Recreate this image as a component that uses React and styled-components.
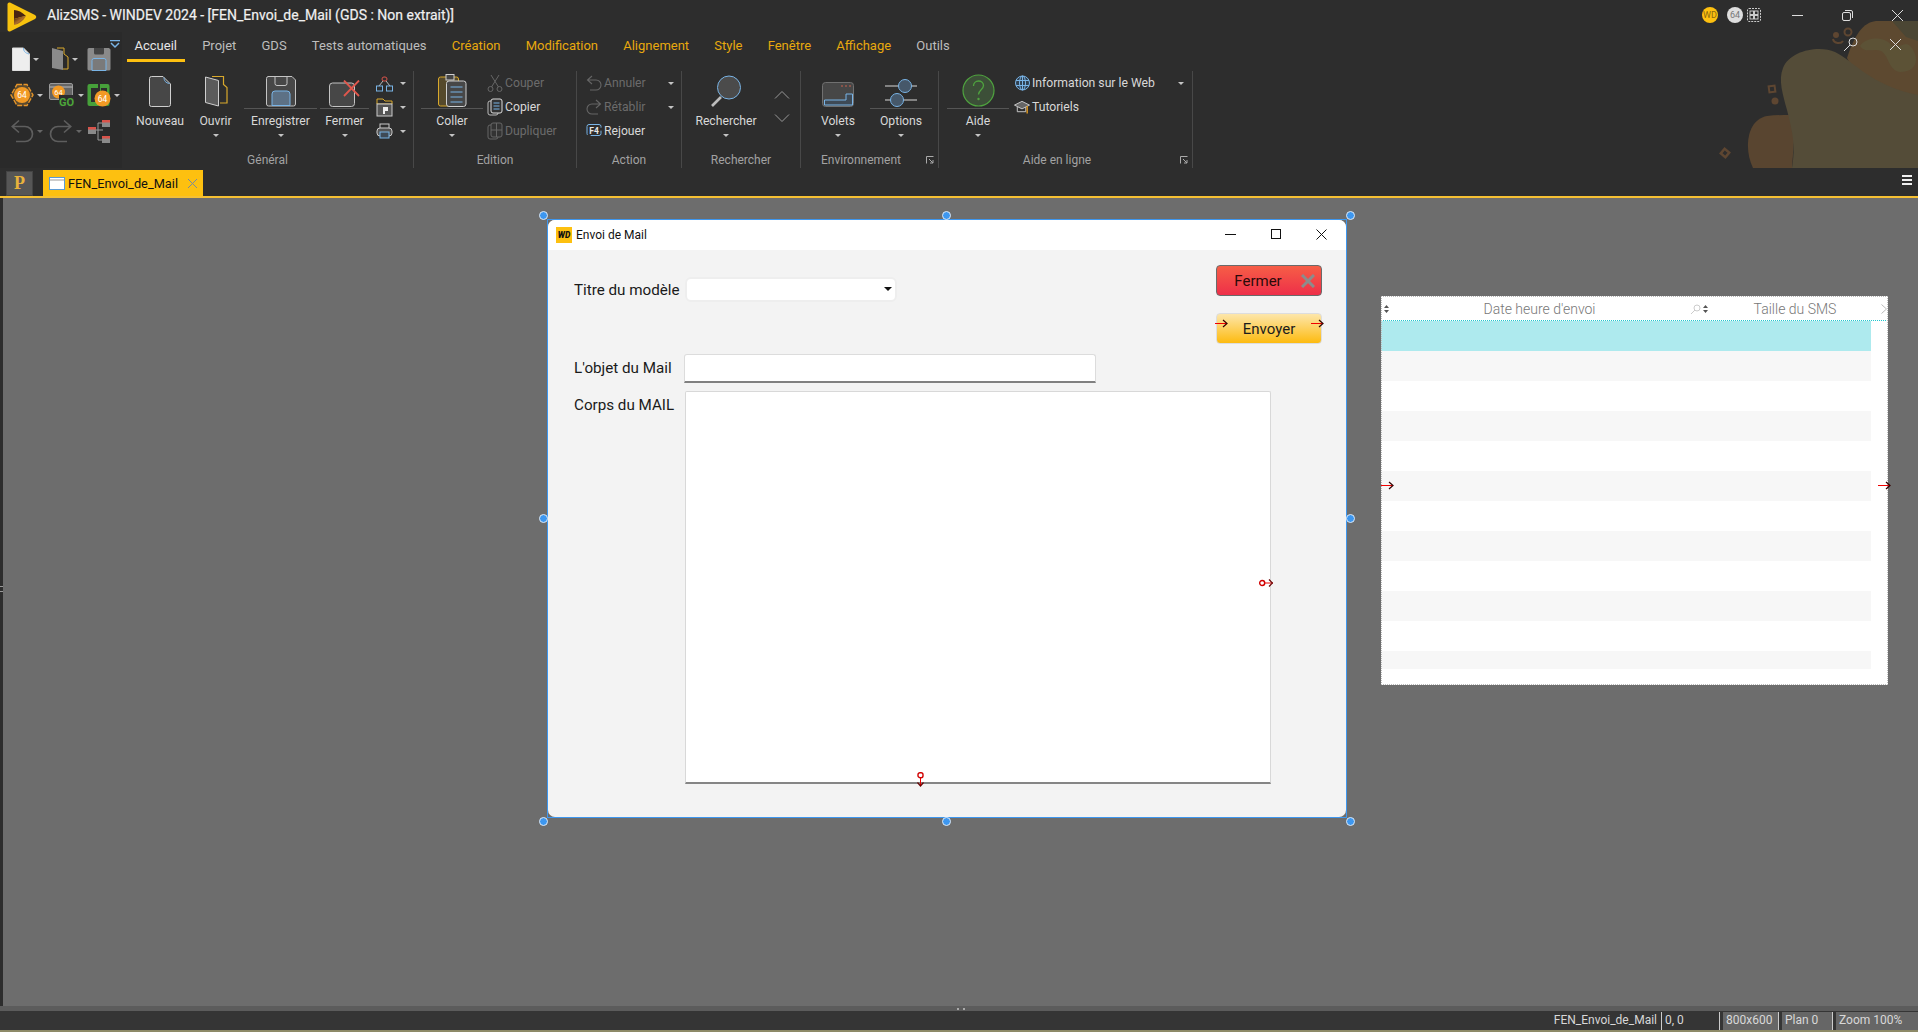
import styled, { createGlobalStyle } from "styled-components";

const GlobalStyle = createGlobalStyle`
    html, body {
        margin: 0;
        padding: 0;
        background: #2d2d2d;
    }
    * {
        box-sizing: border-box;
    }
    body {
        font-family: Roboto, "Noto Sans", sans-serif;
        overflow: hidden;
    }
`;

/* ---------- drawings ---------- */

const Logo = () => (
    <svg width="30" height="32" viewBox="0 0 30 32">
        <defs>
            <linearGradient id="logoBand" x1="0" y1="0" x2="1" y2="1">
                <stop offset="0" stopColor="#3a1c10" />
                <stop offset="0.5" stopColor="#b0702a" />
                <stop offset="1" stopColor="#3a1c10" />
            </linearGradient>
        </defs>
        <path d="M3 1.500 L28 14 Q30.500 16 28 18 L3 30.500 Q0.500 31 0.500 28.500 V3.500 Q0.500 1 3 1.500 Z" fill="#f7c20e" />
        <path d="M7 9 C11 9 15 11 19 15 L14 16 L7 18 Z" fill="#4a2412" />
        <path d="M7 18 L14 16 L19 15 C16 20 12 23 7 24 Z" fill="url(#logoBand)" />
    </svg>
);

const BigDoc = () => (
    <svg width="24" height="32" viewBox="0 0 24 32">
        <path d="M1.500 3.500a2 2 0 0 1 2-2H15l7.500 7.500v20.500a2 2 0 0 1-2 2h-17a2 2 0 0 1-2-2z" fill="#474747" stroke="#cfcfcf" />
        <path d="M16 2.500c0 3 1.500 5.500 5.500 6" fill="none" stroke="#79b4e6" />
    </svg>
);

const BigFolder = () => (
    <svg width="24" height="32" viewBox="0 0 24 32">
        <path d="M8 1.500h11.500v8l3.500 3v15.500h-7" fill="none" stroke="#d9a92c" strokeWidth="1.200" />
        <path d="M1.500 2l13 3.500v25.500l-13-3.500z" fill="#5b5b5b" stroke="#cfcfcf" />
    </svg>
);

const BigSave = () => (
    <svg width="32" height="32" viewBox="0 0 32 32">
        <path d="M3 1.500h24l3.500 3.500v24a2 2 0 0 1-2 2h-25a2 2 0 0 1-2-2V3.500a2 2 0 0 1 2-2z" fill="#474747" stroke="#c4c4c4" />
        <path d="M10 1.500v7a2 2 0 0 0 2 2h8a2 2 0 0 0 2-2v-7" fill="none" stroke="#c4c4c4" />
        <path d="M7 30.500V19a3 3 0 0 1 3-3h12a3 3 0 0 1 3 3v11.500z" fill="#5d7185" stroke="#79b4e6" />
    </svg>
);

const BigClose = () => (
    <svg width="31" height="27" viewBox="0 0 31 27">
        <rect x="0.500" y="3" width="25" height="23.500" rx="3" fill="#474747" stroke="#c4c4c4" />
        <path d="M15 0.500l15 15.500M30 0.500L15 16" stroke="#e0574c" strokeWidth="1.800" />
    </svg>
);

const BigPaste = () => (
    <svg width="29" height="33" viewBox="0 0 29 33">
        <rect x="0.500" y="3" width="20" height="29" rx="2" fill="#55492b" stroke="#d9a92c" />
        <rect x="8.500" y="7" width="19.500" height="25.500" rx="2.500" fill="#474747" stroke="#cfcfcf" />
        <rect x="8" y="0.500" width="8" height="5.500" fill="#444" stroke="#cfcfcf" />
        <path d="M12.500 13h12M12.500 18h12M12.500 23h12M12.500 28h12" stroke="#79b4e6" />
    </svg>
);

const BigSearch = () => (
    <svg width="32" height="32" viewBox="0 0 32 32">
        <circle cx="19" cy="12.500" r="11.500" fill="#4b4b4b" stroke="#79b4e6" />
        <path d="M11 22L2 31" stroke="#bdbdbd" strokeWidth="2.600" />
    </svg>
);

const BigPanes = () => (
    <svg width="32" height="25" viewBox="0 0 32 25">
        <rect x="0.500" y="0.500" width="31" height="24" rx="3" fill="#474747" stroke="#707070" />
        <path d="M24 12h6.500v11H2.500v-5H24z" fill="#3e4a56" stroke="#79b4e6" />
        <path d="M19 4h2M23 4h2M27 4h2" stroke="#a05a4c" strokeWidth="1.500" />
    </svg>
);

const BigOptions = () => (
    <svg width="32" height="28" viewBox="0 0 32 28">
        <path d="M0 7h14M26 7h6M0 21h6M18 21h14" stroke="#d8d8d8" />
        <circle cx="20" cy="7" r="6.500" fill="#46586a" stroke="#79b4e6" />
        <circle cx="12" cy="21" r="6.500" fill="#46586a" stroke="#79b4e6" />
    </svg>
);

const BigHelp = () => (
    <svg width="33" height="33" viewBox="0 0 33 33">
        <circle cx="16.500" cy="16.500" r="15.500" fill="#3c4f38" stroke="#4fa33f" strokeWidth="1.200" />
        <path d="M11.500 12c0-3 2.200-5 5-5s5 2 5 4.600c0 4-5 4.400-5 9" fill="none" stroke="#4fa33f" strokeWidth="1.300" />
        <circle cx="16.500" cy="25" r="1.200" fill="#4fa33f" />
    </svg>
);

const Network = () => (
    <svg width="17" height="16" viewBox="0 0 17 16">
        <rect x="6" y="1" width="5" height="4" rx="2" fill="none" stroke="#d9534a" />
        <path d="M7 5L3 10M10 5l4 5" stroke="#bbb" />
        <rect x="0.500" y="10" width="6" height="5" fill="none" stroke="#79b4e6" />
        <rect x="10.500" y="10" width="6" height="5" fill="none" stroke="#79b4e6" />
    </svg>
);

const PFolder = () => (
    <svg width="17" height="19" viewBox="0 0 17 19">
        <path d="M1 1h6l2 2h7v3H1z" fill="none" stroke="#d9a92c" />
        <rect x="1" y="6" width="15" height="12" fill="#555" stroke="#ccc" />
        <path d="M7 9h5v4H9v3H7z" fill="#eee" />
    </svg>
);

const Printer = () => (
    <svg width="17" height="17" viewBox="0 0 17 17">
        <rect x="4" y="1" width="9" height="5" fill="none" stroke="#ccc" />
        <rect x="1" y="5" width="15" height="8" rx="3" fill="#555" stroke="#ccc" />
        <rect x="4" y="9" width="9" height="6" fill="#3e4a56" stroke="#79b4e6" />
    </svg>
);

const Scissors = () => (
    <svg width="16" height="19" viewBox="0 0 16 19">
        <circle cx="3.500" cy="15" r="2.500" fill="none" stroke="#666" />
        <circle cx="12.500" cy="15" r="2.500" fill="none" stroke="#666" />
        <path d="M4.500 13L12 1M11.500 13L4 1" stroke="#666" />
    </svg>
);

const Copy = () => (
    <svg width="16" height="18" viewBox="0 0 16 18">
        <rect x="1" y="3" width="10" height="14" rx="2" fill="none" stroke="#bbb" />
        <rect x="4" y="1" width="11" height="14" rx="2" fill="#333" stroke="#ddd" />
        <path d="M6.500 5h6M6.500 8h6M6.500 11h6" stroke="#79b4e6" />
    </svg>
);

const Duplicate = () => (
    <svg width="16" height="18" viewBox="0 0 16 18">
        <rect x="1" y="3" width="10" height="14" rx="2" fill="none" stroke="#666" />
        <rect x="4" y="1" width="11" height="14" rx="2" fill="#333" stroke="#666" />
        <path d="M9.500 1v14M4 8h11" stroke="#666" />
    </svg>
);

const Undo = ({ flip, color = "#666", size = 16 }) => (
    <svg width={size} height={size} viewBox="0 0 16 16" style={flip ? { transform: "scaleX(-1)" } : undefined}>
        <path d="M6 1L1.500 5 6 9M2 5h8a4.500 4.500 0 0 1 0 10H4" fill="none" stroke={color} strokeWidth="1.100" />
    </svg>
);

const Replay = () => (
    <svg width="16" height="18" viewBox="0 0 16 18">
        <path d="M3 2.500h10a2 2 0 0 1 2 2v7a2 2 0 0 1-2 2H3a2 2 0 0 1-2-2v-7a2 2 0 0 1 2-2z" fill="none" stroke="#79b4e6" strokeDasharray="14 3" />
        <text x="8" y="11.500" fontSize="8.500" fontWeight="700" fill="#e6e6e6" textAnchor="middle" fontFamily="Roboto, sans-serif">F4</text>
    </svg>
);

const Globe = () => (
    <svg width="15" height="16" viewBox="0 0 15 16">
        <circle cx="7.500" cy="8" r="7" fill="#2f4050" stroke="#79b4e6" />
        <ellipse cx="7.500" cy="8" rx="3" ry="7" fill="none" stroke="#79b4e6" />
        <path d="M1 5.500h13M1 10.500h13M7.500 1v14" stroke="#79b4e6" />
    </svg>
);

const Cap = () => (
    <svg width="17" height="16" viewBox="0 0 17 16">
        <path d="M0.500 6L8.500 2l8 4-8 4z" fill="#666" stroke="#ccc" />
        <path d="M3.500 8v5h9V8" fill="none" stroke="#ccc" />
        <path d="M14 7v8" stroke="#e09a20" strokeWidth="1.500" />
    </svg>
);

const Launcher = () => (
    <svg width="8" height="8" viewBox="0 0 8 8">
        <path d="M7.500 0.500h-7v7" fill="none" stroke="#aaa" />
        <path d="M3 3l4 4M7 4v3H4" fill="none" stroke="#aaa" />
    </svg>
);

const OrangeBadge = ({ cx, cy, r = 7, size = 8.500 }) => (
    <>
        <circle cx={cx} cy={cy} r={r} fill="#f29a25" />
        <text x={cx} y={cy + size * 0.36} fontSize={size} fill="#fff" textAnchor="middle" fontFamily="Roboto, sans-serif">64</text>
    </>
);

const QuickDoc = () => (
    <svg width="18" height="24" viewBox="0 0 18 24">
        <path d="M0.500 1h11l6 6v16.500H.5z" fill="#eee" stroke="#ddd" />
        <path d="M11.500 1c0 3 1.500 5 5.500 6" fill="none" stroke="#79b4e6" />
    </svg>
);

const QuickFolder = () => (
    <svg width="18" height="24" viewBox="0 0 18 24">
        <path d="M6 1h7v6l4 3v12h-5" fill="none" stroke="#d9a92c" />
        <path d="M1 1l11 3v19L1 21z" fill="#8a8a8a" />
    </svg>
);

const QuickSave = () => (
    <svg width="24" height="24" viewBox="0 0 24 24">
        <path d="M2 1h20l1.500 1.500V22a1.500 1.500 0 0 1-1.500 1.500H2A1.500 1.500 0 0 1 .5 22V2.500A1.500 1.500 0 0 1 2 1z" fill="#8a8a8a" />
        <path d="M7 1v5a1.500 1.500 0 0 0 1.500 1.500h7A1.500 1.500 0 0 0 17 6V1z" fill="#444" />
        <path d="M5 23.500V13.500a2 2 0 0 1 2-2h10a2 2 0 0 1 2 2v10z" fill="#7a7a7a" stroke="#79b4e6" />
    </svg>
);

const QuickGear = () => (
    <svg width="24" height="24" viewBox="0 0 24 24">
        <path d="M7 1.500h10l6 10.500-6 10.500H7L1 12z" fill="#5a4a30" stroke="#e6952a" strokeWidth="1.400" strokeDasharray="5 1.500" />
        <OrangeBadge cx={12} cy={12} r={8} />
    </svg>
);

const QuickWindow = () => (
    <svg width="26" height="24" viewBox="0 0 26 24">
        <rect x="0.500" y="0.500" width="23" height="16" rx="1.500" fill="#666" stroke="#999" />
        <path d="M0.500 4h23" stroke="#bbb" />
        <OrangeBadge cx={9.500} cy={9} r={6.500} size={7.500} />
        <rect x="10" y="12" width="15" height="12" fill="#2d2d2d" />
        <text x="17.500" y="23" fontSize="11" fontWeight="700" fill="#4ca63a" textAnchor="middle" fontFamily="Roboto, sans-serif">GO</text>
    </svg>
);

const QuickGo = () => (
    <svg width="24" height="24" viewBox="0 0 24 24">
        <rect x="0.500" y="1" width="22" height="22" rx="2" fill="#46a03a" />
        <rect x="4" y="5" width="7" height="14" fill="#2d2d2d" />
        <rect x="14" y="5" width="6" height="8" fill="#2d2d2d" />
        <rect x="11" y="0" width="2" height="10" fill="#2d2d2d" />
        <OrangeBadge cx={15.500} cy={15.500} r={8} />
    </svg>
);

const QuickTree = () => (
    <svg width="24" height="24" viewBox="0 0 24 24">
        <path d="M7 11h9M11 4v17M11 4h6M11 21h6" stroke="#999" />
        <rect x="1" y="8" width="8" height="7" fill="#8a8a8a" />
        <rect x="1" y="8" width="8" height="2.500" fill="#d9534a" />
        <rect x="15" y="1" width="8" height="7" fill="#8a8a8a" />
        <rect x="15" y="1" width="8" height="2.500" fill="#d9534a" />
        <rect x="15" y="17" width="8" height="7" fill="#8a8a8a" />
        <rect x="15" y="17" width="8" height="2.500" fill="#d9534a" />
    </svg>
);

const Art = () => (
    <svg width="200" height="147" viewBox="1718 21 200 147">
        <path d="M1847 58C1856 30 1866 21 1878 21H1918V105C1890 98 1860 85 1847 58Z" fill="#5d4930" />
        <path d="M1892 21h26v20l-12 -4z" fill="#4b4634" />
        <path d="M1753 168C1744 150 1746 120 1767 116C1775 115 1782 115 1790 115L1794 140L1792 168Z" fill="#594530" />
        <path d="M1792 168C1796 145 1792 130 1787 110C1783 95 1778 80 1783 68C1790 50 1820 45 1835 52C1855 62 1870 85 1918 95V168Z" fill="#544c38" />
        <path d="M1860 46C1866 36 1886 36 1892 46C1900 50 1905 38 1912 48C1920 60 1916 72 1900 72C1886 70 1890 50 1876 50C1870 50 1864 52 1860 46Z" fill="#5c5236" />
        <rect x="1769" y="86" width="6" height="6" fill="none" stroke="#5e4631" strokeWidth="2" transform="rotate(-8 1772 89)" />
        <circle cx="1775" cy="101" r="3.500" fill="#5e4631" />
        <rect x="1722" y="150" width="6" height="6" fill="none" stroke="#5e4631" strokeWidth="2.500" transform="rotate(40 1725 153)" />
        <circle cx="1836" cy="35" r="3" fill="#5e4631" />
        <circle cx="1848" cy="32" r="3.500" fill="none" stroke="#5e4631" strokeWidth="2" />
        <path d="M1833 39c1 5 8 5 10 2" fill="none" stroke="#5e4631" strokeWidth="2" />
    </svg>
);

const RedArrow = () => (
    <svg width="13" height="9" viewBox="0 0 13 9">
        <path d="M0 4.500h11" stroke="#f00000" />
        <path d="M8 1l4 3.500L8 8" fill="none" stroke="#300" strokeWidth="1.200" />
    </svg>
);

const SortGrip = () => (
    <svg width="5" height="8" viewBox="0 0 5 8">
        <path d="M2.500 0L5 3H0zM2.500 8L0 5h5z" fill="#555" />
    </svg>
);

/* ---------- data ---------- */

const tabs = [
    { title: "Accueil", active: true },
    { title: "Projet" },
    { title: "GDS" },
    { title: "Tests automatiques" },
    { title: "Création", accent: true },
    { title: "Modification", accent: true },
    { title: "Alignement", accent: true },
    { title: "Style", accent: true },
    { title: "Fenêtre", accent: true },
    { title: "Affichage", accent: true },
    { title: "Outils" },
];

const tableRows = [...Array(12).keys()];

const handles = [
    { x: -5, y: -5 },
    { x: 398, y: -5 },
    { x: 802, y: -5 },
    { x: -5, y: 298 },
    { x: 802, y: 298 },
    { x: -5, y: 601 },
    { x: 398, y: 601 },
    { x: 802, y: 601 },
];

/* ---------- page ---------- */

const App = () => {
    return (
        <Page>
            <GlobalStyle />
            <ArtLayer>
                <Art />
            </ArtLayer>

            <TitleBar>
                <LogoBox>
                    <Logo />
                </LogoBox>
                <AppTitle>AlizSMS - WINDEV 2024 - [FEN_Envoi_de_Mail (GDS : Non extrait)]</AppTitle>
                <StatusIcons>
                    <RoundBadge $bg="#fdc010" $color="#8a6a10">WD</RoundBadge>
                    <RoundBadge $bg="#dedede" $color="#777" $left={9}>64</RoundBadge>
                    <ChipIcon>
                        <svg width="14" height="14" viewBox="0 0 14 14">
                            <rect x="0.500" y="0.500" width="13" height="13" rx="1.500" fill="none" stroke="#ccc" strokeDasharray="2 1" />
                            <rect x="3" y="3" width="3.500" height="3.500" fill="none" stroke="#ccc" />
                            <rect x="7.500" y="3" width="3.500" height="3.500" fill="none" stroke="#ccc" />
                            <rect x="3" y="7.500" width="3.500" height="3.500" fill="none" stroke="#ccc" />
                            <rect x="7.500" y="7.500" width="3.500" height="3.500" fill="none" stroke="#ccc" />
                        </svg>
                    </ChipIcon>
                </StatusIcons>
                <WinControls>
                    <svg width="11" height="11" viewBox="0 0 11 11">
                        <path d="M0 5.500h11" stroke="#ddd" />
                    </svg>
                    <svg width="11" height="11" viewBox="0 0 11 11">
                        <rect x="0.500" y="2.500" width="8" height="8" rx="1.500" fill="none" stroke="#ddd" />
                        <path d="M3 .5h6a1.500 1.500 0 0 1 1.500 1.500v6" fill="none" stroke="#ddd" />
                    </svg>
                    <svg width="11" height="11" viewBox="0 0 11 11">
                        <path d="M0 0l11 11M11 0L0 11" stroke="#ddd" />
                    </svg>
                </WinControls>
            </TitleBar>

            <Ribbon>
                <QuickPanel>
                    <QuickChevron>
                        <svg width="10" height="9" viewBox="0 0 10 9">
                            <path d="M0 .5h10M1 3l4 4 4-4" fill="none" stroke="#79b4e6" strokeWidth="1.500" />
                        </svg>
                    </QuickChevron>
                    <QuickCell $pad={2}><QuickDoc /><Caret /></QuickCell>
                    <QuickCell $pad={2}><QuickFolder /><Caret /></QuickCell>
                    <QuickCell $pad={0}><QuickSave /></QuickCell>
                    <QuickCell><QuickGear /><Caret /></QuickCell>
                    <QuickCell><QuickWindow /><Caret /></QuickCell>
                    <QuickCell><QuickGo /><Caret /></QuickCell>
                    <QuickCell><Undo size={24} color="#5e5e5e" /><Caret $dim /></QuickCell>
                    <QuickCell><Undo size={24} color="#5e5e5e" flip /><Caret $dim /></QuickCell>
                    <QuickCell><QuickTree /></QuickCell>
                </QuickPanel>

                <RibbonMain>
                    <TabRow>
                        {tabs.map((tab) => (
                            <RibbonTab key={tab.title} $active={tab.active} $accent={tab.accent}>
                                {tab.title}
                            </RibbonTab>
                        ))}
                        <RibbonTools>
                            <svg width="18" height="18" viewBox="0 0 18 18">
                                <circle cx="11" cy="7" r="4" fill="none" stroke="#ddd" />
                                <path d="M8 10l-6 6" stroke="#ddd" />
                            </svg>
                            <svg width="11" height="11" viewBox="0 0 11 11">
                                <path d="M0 0l11 11M11 0L0 11" stroke="#ddd" />
                            </svg>
                        </RibbonTools>
                    </TabRow>

                    <GroupRow>
                        <Group $width={292}>
                            <GroupBody $pad={8}>
                                <LargeButton $width={60}>
                                    <LargeIcon><BigDoc /></LargeIcon>
                                    <LargeLabel>Nouveau</LargeLabel>
                                </LargeButton>
                                <LargeButton $width={51}>
                                    <LargeIcon><BigFolder /></LargeIcon>
                                    <LargeLabel>Ouvrir</LargeLabel>
                                    <Caret />
                                </LargeButton>
                                <LargeButton $width={73} $split>
                                    <LargeIcon $split><BigSave /></LargeIcon>
                                    <LargeLabel>Enregistrer</LargeLabel>
                                    <Caret />
                                </LargeButton>
                                <LargeButton $width={49} $split>
                                    <LargeIcon $split><BigClose /></LargeIcon>
                                    <LargeLabel>Fermer</LargeLabel>
                                    <Caret />
                                </LargeButton>
                                <IconColumn>
                                    <IconOnly><Network /><Caret /></IconOnly>
                                    <IconOnly><PFolder /><Caret /></IconOnly>
                                    <IconOnly><Printer /><Caret /></IconOnly>
                                </IconColumn>
                            </GroupBody>
                            <GroupLabel>Général</GroupLabel>
                        </Group>

                        <Group $width={163}>
                            <GroupBody $pad={7}>
                                <LargeButton $width={62}>
                                    <LargeIcon $split><BigPaste /></LargeIcon>
                                    <LargeLabel>Coller</LargeLabel>
                                    <Caret />
                                </LargeButton>
                                <SmallColumn $left={4}>
                                    <SmallRow $disabled><SmallIcon><Scissors /></SmallIcon>Couper</SmallRow>
                                    <SmallRow><SmallIcon><Copy /></SmallIcon>Copier</SmallRow>
                                    <SmallRow $disabled><SmallIcon><Duplicate /></SmallIcon>Dupliquer</SmallRow>
                                </SmallColumn>
                            </GroupBody>
                            <GroupLabel>Edition</GroupLabel>
                        </Group>

                        <Group $width={105}>
                            <GroupBody $pad={9}>
                                <SmallColumn $width={90}>
                                    <SmallRow $disabled><SmallIcon><Undo /></SmallIcon>Annuler<RowCaret><Caret /></RowCaret></SmallRow>
                                    <SmallRow $disabled><SmallIcon><Undo flip /></SmallIcon>Rétablir<RowCaret><Caret /></RowCaret></SmallRow>
                                    <SmallRow><SmallIcon><Replay /></SmallIcon>Rejouer</SmallRow>
                                </SmallColumn>
                            </GroupBody>
                            <GroupLabel>Action</GroupLabel>
                        </Group>

                        <Group $width={119}>
                            <GroupBody $pad={12}>
                                <LargeButton $width={64}>
                                    <LargeIcon><BigSearch /></LargeIcon>
                                    <LargeLabel>Rechercher</LargeLabel>
                                    <Caret />
                                </LargeButton>
                                <ChevronColumn>
                                    <svg width="16" height="8" viewBox="0 0 16 8">
                                        <path d="M1 7.500l7-7 7 7" fill="none" stroke="#999" />
                                    </svg>
                                    <svg width="16" height="8" viewBox="0 0 16 8">
                                        <path d="M1 .5l7 7 7-7" fill="none" stroke="#999" />
                                    </svg>
                                </ChevronColumn>
                            </GroupBody>
                            <GroupLabel>Rechercher</GroupLabel>
                        </Group>

                        <Group $width={138} $launcher>
                            <GroupBody $pad={8}>
                                <LargeButton $width={58}>
                                    <LargeIcon><BigPanes /></LargeIcon>
                                    <LargeLabel>Volets</LargeLabel>
                                    <Caret />
                                </LargeButton>
                                <LargeButton $width={62} $split>
                                    <LargeIcon $split><BigOptions /></LargeIcon>
                                    <LargeLabel>Options</LargeLabel>
                                    <Caret />
                                </LargeButton>
                            </GroupBody>
                            <GroupLabel>Environnement</GroupLabel>
                            <LauncherBox><Launcher /></LauncherBox>
                        </Group>

                        <Group $width={254} $launcher>
                            <GroupBody $pad={8}>
                                <LargeButton $width={62}>
                                    <LargeIcon $split><BigHelp /></LargeIcon>
                                    <LargeLabel>Aide</LargeLabel>
                                    <Caret />
                                </LargeButton>
                                <SmallColumn $left={5} $width={172}>
                                    <SmallRow><SmallIcon><Globe /></SmallIcon>Information sur le Web<RowCaret><Caret /></RowCaret></SmallRow>
                                    <SmallRow><SmallIcon><Cap /></SmallIcon>Tutoriels</SmallRow>
                                </SmallColumn>
                            </GroupBody>
                            <GroupLabel>Aide en ligne</GroupLabel>
                            <LauncherBox><Launcher /></LauncherBox>
                        </Group>
                    </GroupRow>
                </RibbonMain>
            </Ribbon>

            <DocBar>
                <ProjectButton>P</ProjectButton>
                <DocTab>
                    <svg width="16" height="13" viewBox="0 0 16 13">
                        <rect x="0.500" y="0.500" width="15" height="12" fill="#fff" stroke="#5b9bd5" />
                        <path d="M1 3h14" stroke="#ccc" strokeWidth="2" />
                    </svg>
                    <DocTabTitle>FEN_Envoi_de_Mail</DocTabTitle>
                    <svg width="9" height="9" viewBox="0 0 9 9">
                        <path d="M0 0l9 9M9 0L0 9" stroke="#7a8a9a" />
                    </svg>
                </DocTab>
                <MenuLines>
                    <span />
                    <span />
                    <span />
                </MenuLines>
            </DocBar>

            <Canvas>
                <LeftGrip />
                <WindowFrame>
                    {handles.map((h) => (
                        <Handle key={`${h.x}-${h.y}`} style={{ left: h.x - 4, top: h.y - 4 }} />
                    ))}
                    <WindowInner>
                        <WindowTitle>
                            <WdIcon>WD</WdIcon>
                            <WindowName>Envoi de Mail</WindowName>
                            <WindowButtons>
                                <WindowButton>
                                    <svg width="11" height="11" viewBox="0 0 11 11">
                                        <path d="M0 5.500h11" stroke="#111" />
                                    </svg>
                                </WindowButton>
                                <WindowButton>
                                    <svg width="10" height="10" viewBox="0 0 10 10">
                                        <rect x="0.500" y="0.500" width="9" height="9" fill="none" stroke="#111" />
                                    </svg>
                                </WindowButton>
                                <WindowButton>
                                    <svg width="11" height="11" viewBox="0 0 11 11">
                                        <path d="M.5.500l10 10M10.500.5l-10 10" stroke="#111" />
                                    </svg>
                                </WindowButton>
                            </WindowButtons>
                        </WindowTitle>

                        <FormBody>
                            <FormTop>
                                <FormFields>
                                    <FieldRow $top={12}>
                                        <FieldLabel>Titre du modèle</FieldLabel>
                                        <Combo>
                                            <ComboCaret />
                                        </Combo>
                                    </FieldRow>
                                    <FieldRow $top={52}>
                                        <FieldLabel $shift={-1}>L'objet du Mail</FieldLabel>
                                        <TextField />
                                    </FieldRow>
                                </FormFields>
                                <FormButtons>
                                    <CloseButton>
                                        Fermer
                                        <CloseMark>
                                            <svg width="14" height="14" viewBox="0 0 14 14">
                                                <path d="M1 1l12 12M13 1L1 13" stroke="#8c8c8c" strokeWidth="3" />
                                            </svg>
                                        </CloseMark>
                                    </CloseButton>
                                    <SendButton>
                                        Envoyer
                                        <ArrowLeft><RedArrow /></ArrowLeft>
                                        <ArrowRight><RedArrow /></ArrowRight>
                                    </SendButton>
                                </FormButtons>
                            </FormTop>
                            <BodyRow>
                                <FieldLabel $top={5}>Corps du MAIL</FieldLabel>
                                <TextArea>
                                    <ResizeRight>
                                        <svg width="14" height="8" viewBox="0 0 14 8">
                                            <path d="M0 4h14" stroke="#f00000" />
                                            <rect x="0.700" y="1.500" width="5" height="5" rx="2.500" fill="#fff" stroke="#d00000" strokeWidth="1.400" />
                                            <path d="M10 .5l3.500 3.500-3.500 3.500" fill="none" stroke="#600" strokeWidth="1.200" />
                                        </svg>
                                    </ResizeRight>
                                    <ResizeBottom>
                                        <svg width="7" height="15" viewBox="0 0 7 15">
                                            <path d="M3.500 0v14" stroke="#f00000" />
                                            <rect x="1" y="0.700" width="5" height="5" rx="2" fill="#fff" stroke="#d00000" strokeWidth="1.400" />
                                            <path d="M.5 10.500l3 3.500 3-3.500" fill="none" stroke="#600" strokeWidth="1.200" />
                                        </svg>
                                    </ResizeBottom>
                                </TextArea>
                            </BodyRow>
                        </FormBody>
                    </WindowInner>
                </WindowFrame>

                <TablePreview>
                    <TableHeader>
                        <SortGrip />
                        <HeaderCell $width={301}>Date heure d'envoi</HeaderCell>
                        <HeaderSearch>
                            <svg width="11" height="11" viewBox="0 0 11 11">
                                <circle cx="7" cy="4" r="3" fill="none" stroke="#ccc" />
                                <path d="M5 6L1 10" stroke="#ccc" />
                            </svg>
                            <SortGrip />
                        </HeaderSearch>
                        <HeaderCell $width={172}>Taille du SMS</HeaderCell>
                        <svg width="6" height="10" viewBox="0 0 6 10">
                            <path d="M.5.5l5 4.500-5 4.500" fill="none" stroke="#bbb" />
                        </svg>
                    </TableHeader>
                    {tableRows.map((row) => (
                        <TableRow key={row} $index={row} />
                    ))}
                    <TableArrowLeft><RedArrow /></TableArrowLeft>
                    <TableArrowRight><RedArrow /></TableArrowRight>
                </TablePreview>
            </Canvas>

            <BottomGrip>
                <span />
            </BottomGrip>

            <StatusBar>
                <StatusName>FEN_Envoi_de_Mail</StatusName>
                <StatusCell $width={58}>0, 0</StatusCell>
                <StatusCell $width={59}><StatusValue>800x600</StatusValue></StatusCell>
                <StatusCell $width={54}><StatusValue>Plan 0</StatusValue></StatusCell>
                <StatusCell $width={86}><StatusValue>Zoom 100%</StatusValue></StatusCell>
            </StatusBar>
            <BottomStrip />
        </Page>
    );
};
export default App;

const Page = styled.div`
    position: relative;
    width: 1918px;
    height: 1032px;
    display: flex;
    flex-direction: column;
    background: #2d2d2d;
    overflow: hidden;
`;

const ArtLayer = styled.div`
    position: absolute;
    top: 21px;
    right: 0;
    height: 147px;
`;

const TitleBar = styled.div`
    position: relative;
    height: 32px;
    display: flex;
    align-items: center;
    padding-bottom: 2px;
    flex: none;
`;

const LogoBox = styled.div`
    width: 47px;
    padding-left: 7px;
    height: 32px;
    margin-top: 4px;
`;

const AppTitle = styled.div`
    font-size: 14px;
    color: #f0f0f0;
    white-space: nowrap;
    -webkit-text-stroke: 0.2px #f0f0f0;
`;

const StatusIcons = styled.div`
    margin-left: auto;
    display: flex;
    align-items: center;
`;

const RoundBadge = styled.div`
    width: 16px;
    height: 16px;
    margin-left: ${(props) => props.$left || 0}px;
    border-radius: 50%;
    background: ${(props) => props.$bg};
    color: ${(props) => props.$color};
    font-size: 9px;
    line-height: 16px;
    text-align: center;
`;

const ChipIcon = styled.div`
    display: flex;
    margin-left: 4px;
`;

const WinControls = styled.div`
    display: flex;
    align-items: center;
    width: 157px;
    padding-left: 31px;
    gap: 39px;
`;

const Ribbon = styled.div`
    position: relative;
    height: 136px;
    display: flex;
    flex: none;
`;

const QuickPanel = styled.div`
    position: relative;
    width: 122px;
    flex: none;
    display: grid;
    grid-template-columns: repeat(3, 38.5px);
    grid-auto-rows: 36px;
    align-content: start;
    padding: 15px 0 0 10px;
    background: #2a2a2a;
`;

const QuickChevron = styled.div`
    position: absolute;
    top: 2px;
    right: 2px;
`;

const QuickCell = styled.div`
    display: flex;
    align-items: center;
    height: 24px;
    padding-left: ${(props) => props.$pad || 0}px;
    gap: 3px;
`;

const Caret = styled.span`
    display: block;
    flex: none;
    width: 0;
    height: 0;
    border-left: 3px solid transparent;
    border-right: 3px solid transparent;
    border-top: 3px solid ${(props) => (props.$dim ? "#666" : "#c4c4c4")};
`;

const RibbonMain = styled.div`
    flex: 1;
    display: flex;
    flex-direction: column;
    position: relative;
`;

const TabRow = styled.div`
    position: relative;
    height: 39px;
    display: flex;
    align-items: flex-start;
`;

const RibbonTab = styled.div`
    height: 30px;
    padding: 6px 8px 0;
    margin: 0 4.7px 0 4.5px;
    font-size: 13px;
    line-height: 16px;
    white-space: nowrap;
    color: ${(props) => (props.$accent ? "#e8a90e" : props.$active ? "#e6e6e6" : "#bdbdbd")};
    border-bottom: 3px solid ${(props) => (props.$active ? "#fdc010" : "transparent")};
`;

const RibbonTools = styled.div`
    position: absolute;
    top: 3px;
    right: 17px;
    display: flex;
    align-items: center;
    gap: 30px;
`;

const GroupRow = styled.div`
    display: flex;
    height: 97px;
`;

const Group = styled.div`
    position: relative;
    width: ${(props) => props.$width}px;
    display: flex;
    flex-direction: column;
    flex: none;
    border-right: 1px solid #484848;
    ${(props) => props.$launcher && "--label-pad: 17px;"}
`;

const GroupBody = styled.div`
    display: flex;
    height: 81px;
    padding-left: ${(props) => props.$pad}px;
`;

const GroupLabel = styled.div`
    height: 16px;
    font-size: 12px;
    line-height: 16px;
    color: #a2a2a2;
    text-align: center;
    padding-right: var(--label-pad, 0);
`;

const LauncherBox = styled.div`
    position: absolute;
    right: 4px;
    bottom: 4px;
    display: flex;
`;

const LargeButton = styled.div`
    width: ${(props) => props.$width}px;
    margin-left: ${(props) => (props.$split ? 3 : 0)}px;
    display: flex;
    flex-direction: column;
    align-items: center;
    flex: none;
`;

const LargeIcon = styled.div`
    width: 100%;
    height: 38px;
    display: flex;
    align-items: flex-end;
    justify-content: center;
    padding-bottom: 1px;
    border-bottom: 1px solid ${(props) => (props.$split ? "#555" : "transparent")};
`;

const LargeLabel = styled.div`
    height: 25px;
    font-size: 12.2px;
    line-height: 25px;
    color: #d8d8d8;
    white-space: nowrap;
`;

const IconColumn = styled.div`
    margin-left: 7px;
    padding-top: 2px;
    display: flex;
    flex-direction: column;
    gap: 3px;
`;

const IconOnly = styled.div`
    display: flex;
    align-items: center;
    height: 21px;
    gap: 7px;
`;

const SmallColumn = styled.div`
    margin-left: ${(props) => props.$left || 0}px;
    width: ${(props) => (props.$width ? `${props.$width}px` : "auto")};
    padding-top: 2px;
    display: flex;
    flex-direction: column;
    gap: 4px;
`;

const SmallRow = styled.div`
    display: flex;
    align-items: center;
    height: 20px;
    font-size: 12.2px;
    color: ${(props) => (props.$disabled ? "#6b6b6b" : "#d8d8d8")};
    white-space: nowrap;
`;

const SmallIcon = styled.span`
    display: flex;
    justify-content: center;
    width: 16px;
    margin-right: 2px;
    flex: none;
`;

const RowCaret = styled.span`
    margin-left: auto;
    margin-right: 2px;
`;

const ChevronColumn = styled.div`
    margin-left: 16px;
    padding-top: 20px;
    display: flex;
    flex-direction: column;
    gap: 15px;
`;

const DocBar = styled.div`
    position: relative;
    height: 30px;
    display: flex;
    align-items: flex-end;
    padding-left: 6px;
    flex: none;
    border-bottom: 2px solid #f5c033;
`;

const ProjectButton = styled.div`
    width: 27px;
    height: 25px;
    background: #565656;
    border: 1px solid #444;
    color: #e8b23c;
    font-family: "Liberation Serif", serif;
    font-weight: 700;
    font-size: 18px;
    line-height: 23px;
    text-align: center;
`;

const DocTab = styled.div`
    width: 160px;
    height: 26px;
    margin-left: 10px;
    padding-left: 6px;
    display: flex;
    align-items: center;
    background: #fdc010;
`;

const DocTabTitle = styled.span`
    margin: 0 10px 0 3px;
    font-size: 12.8px;
    color: #111;
    white-space: nowrap;
`;

const MenuLines = styled.div`
    position: absolute;
    top: 7px;
    right: 6px;
    display: flex;
    flex-direction: column;
    gap: 2px;

    span {
        display: block;
        width: 10px;
        height: 2px;
        background: #eee;
    }
`;

const Canvas = styled.div`
    position: relative;
    height: 808px;
    flex: none;
    margin-left: 3px;
    background: #6d6d6d;
`;

const LeftGrip = styled.div`
    position: absolute;
    left: -3px;
    top: 388px;
    width: 3px;
    height: 6px;
    border-top: 1px solid #999;
    border-bottom: 1px solid #999;
`;

const WindowFrame = styled.div`
    position: absolute;
    left: 544px;
    top: 21px;
    width: 800px;
    height: 599px;
    border: 1px solid #3d97f0;
    background: #6d6d6d;
`;

const Handle = styled.span`
    position: absolute;
    width: 9px;
    height: 9px;
    border-radius: 50%;
    background: #3d97f0;
    border: 1px solid #dfeaf5;
    z-index: 2;
`;

const WindowInner = styled.div`
    height: 100%;
    display: flex;
    flex-direction: column;
    border-radius: 7px;
    overflow: hidden;
    background: #f3f3f3;
`;

const WindowTitle = styled.div`
    height: 30px;
    display: flex;
    align-items: center;
    padding-left: 8px;
    background: #fff;
    flex: none;
`;

const WdIcon = styled.span`
    width: 16px;
    height: 16px;
    background: #fdc010;
    color: #111;
    font-size: 8.5px;
    font-weight: 900;
    font-style: italic;
    line-height: 16px;
    text-align: center;
`;

const WindowName = styled.span`
    margin-left: 4px;
    font-size: 12px;
    color: #111;
`;

const WindowButtons = styled.div`
    margin-left: auto;
    display: flex;
    height: 100%;
    padding: 0 2px 2px 0;
`;

const WindowButton = styled.div`
    width: 45.5px;
    display: flex;
    align-items: center;
    justify-content: center;
`;

const FormBody = styled.div`
    flex: 1;
    padding-left: 26px;
`;

const FormTop = styled.div`
    display: flex;
    justify-content: space-between;
    height: 141px;
    padding: 15px 24px 0 0;
`;

const FormFields = styled.div`
    display: flex;
    flex-direction: column;
`;

const FieldRow = styled.div`
    display: flex;
    align-items: center;
    margin-top: ${(props) => props.$top}px;
`;

const FieldLabel = styled.div`
    width: 111px;
    margin-top: ${(props) => props.$top || 0}px;
    font-size: 15.2px;
    color: #1a1a1a;
    white-space: nowrap;
    flex: none;
    transform: translateY(${(props) => props.$shift || 0}px);
`;

const Combo = styled.div`
    position: relative;
    width: 212px;
    height: 25px;
    background: #fff;
    border: 2px solid #eee;
    border-radius: 6px;
`;

const ComboCaret = styled.span`
    position: absolute;
    right: 3px;
    top: 8px;
    width: 0;
    height: 0;
    border-left: 4px solid transparent;
    border-right: 4px solid transparent;
    border-top: 4px solid #111;
`;

const TextField = styled.div`
    width: 412px;
    height: 29px;
    margin-left: -1px;
    background: #fff;
    border: 1px solid #dcdcdc;
    border-bottom: 2px solid #808080;
    border-radius: 3px 3px 0 0;
`;

const FormButtons = styled.div`
    display: flex;
    flex-direction: column;
    gap: 17px;
`;

const CloseButton = styled.div`
    position: relative;
    width: 106px;
    height: 31px;
    padding-right: 22px;
    display: flex;
    align-items: center;
    justify-content: center;
    background: linear-gradient(#f65e46, #ee2f49);
    border: 1px solid #6a6a6a;
    border-radius: 4px;
    font-size: 15px;
    color: #2a0a0a;
`;

const CloseMark = styled.span`
    position: absolute;
    right: 6px;
    top: 8px;
    display: flex;
`;

const SendButton = styled.div`
    position: relative;
    width: 106px;
    height: 31px;
    display: flex;
    align-items: center;
    justify-content: center;
    background: linear-gradient(#fde6ab, #fdbb10);
    border: 1px solid #ddd;
    border-radius: 4px;
    font-size: 15px;
    color: #1c1c1c;
`;

const ArrowLeft = styled.span`
    position: absolute;
    left: -2px;
    top: 5px;
    display: flex;
`;

const ArrowRight = styled.span`
    position: absolute;
    right: -3px;
    top: 5px;
    display: flex;
`;

const BodyRow = styled.div`
    display: flex;
    align-items: flex-start;
`;

const TextArea = styled.div`
    position: relative;
    width: 586px;
    height: 393px;
    background: #fff;
    border: 1px solid #d8d8d8;
    border-bottom: 2px solid #858585;
    border-radius: 2px 2px 0 0;
`;

const ResizeRight = styled.span`
    position: absolute;
    right: -3px;
    top: 187px;
    display: flex;
`;

const ResizeBottom = styled.span`
    position: absolute;
    left: 231px;
    bottom: -5px;
    display: flex;
`;

const TablePreview = styled.div`
    position: absolute;
    left: 1378px;
    top: 98px;
    width: 507px;
    height: 389px;
    background: #fff;
    outline: 1px dotted #bbb;
    outline-offset: -1px;
`;

const TableHeader = styled.div`
    height: 25px;
    display: flex;
    align-items: center;
    padding: 2px 0 0 3px;
    border-bottom: 1px dotted #20c8d0;
    color: #777;
    font-size: 14px;
    font-weight: 300;
`;

const HeaderCell = styled.div`
    width: ${(props) => props.$width}px;
    text-align: center;
    white-space: nowrap;
`;

const HeaderSearch = styled.div`
    display: flex;
    align-items: center;
    gap: 2px;
    width: 19px;
`;

const TableRow = styled.div`
    width: 490px;
    height: ${(props) => (props.$index === 11 ? 18 : 30)}px;
    background: ${(props) => (props.$index === 0 ? "#aeeaee" : props.$index % 2 ? "#f7f7f7" : "#fff")};
`;

const TableArrowLeft = styled.span`
    position: absolute;
    left: 0;
    top: 185px;
    display: flex;
`;

const TableArrowRight = styled.span`
    position: absolute;
    right: -3px;
    top: 185px;
    display: flex;
`;

const BottomGrip = styled.div`
    height: 5px;
    flex: none;
    display: flex;
    justify-content: center;
    background: #5c5c5c;

    span {
        width: 8px;
        height: 2px;
        margin-top: 2px;
        margin-left: 4px;
        border-left: 2px solid #aaa;
        border-right: 2px solid #aaa;
    }
`;

const StatusBar = styled.div`
    height: 19px;
    flex: none;
    display: flex;
    justify-content: flex-end;
    padding-top: 1px;
    background: #353535;
    font-size: 12px;
    color: #d8d8d8;
`;

const StatusName = styled.div`
    margin-right: 4px;
    line-height: 17px;
    white-space: nowrap;
`;

const StatusCell = styled.div`
    width: ${(props) => props.$width}px;
    padding-left: 3px;
    line-height: 17px;
    white-space: nowrap;
    border-left: 1px solid #ccc;
`;

const StatusValue = styled.div`
    height: 100%;
    padding-left: 3px;
    background: #666;
`;

const BottomStrip = styled.div`
    height: 2px;
    flex: none;
    background: #8d8a68;
`;
